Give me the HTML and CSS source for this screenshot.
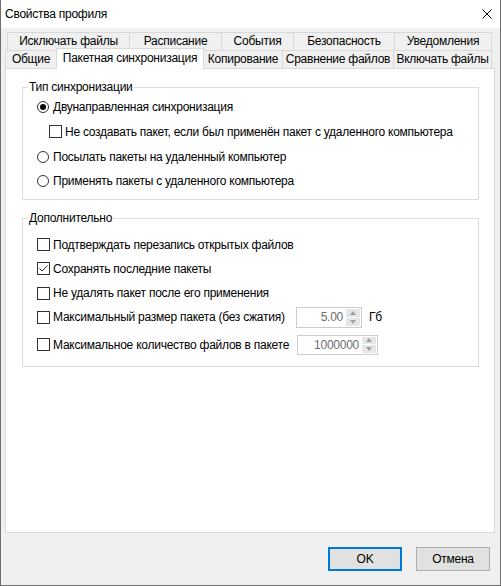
FILE: index.html
```html
<!DOCTYPE html>
<html lang="ru">
<head>
<meta charset="utf-8">
<title>Свойства профиля</title>
<link rel="stylesheet" href="styles.css">
</head>
<body>
<div class="window">
  <div class="titlebar">
    <span class="title">Свойства профиля</span>
    <svg class="close" width="10" height="10" viewBox="0 0 10 10"><path d="M0.5 0.5L9.5 9.5M9.5 0.5L0.5 9.5" stroke="#000" stroke-width="1" fill="none"/></svg>
  </div>
  <div class="client">
    <div class="tabs">
      <div class="tabrow back">
        <div class="tab t-excl">Исключать файлы</div>
        <div class="tab t-sched">Расписание</div>
        <div class="tab t-events">События</div>
        <div class="tab t-sec">Безопасность</div>
        <div class="tab t-notif">Уведомления</div>
      </div>
      <div class="tabrow front">
        <div class="tab t-general">Общие</div>
        <div class="tab t-batch selected">Пакетная синхронизация</div>
        <div class="tab t-copy">Копирование</div>
        <div class="tab t-compare">Сравнение файлов</div>
        <div class="tab t-incl">Включать файлы</div>
      </div>
    </div>
    <div class="panel">
      <fieldset class="group">
        <legend>Тип синхронизации</legend>
        <div class="rows rows-sync">
          <div class="opt h24"><span class="radio on"></span><span>Двунаправленная синхронизация</span></div>
          <div class="opt h25 nested"><span class="check"></span><span>Не создавать пакет, если был применён пакет с удаленного компьютера</span></div>
          <div class="opt h25"><span class="radio"></span><span>Посылать пакеты на удаленный компьютер</span></div>
          <div class="opt h24"><span class="radio"></span><span>Применять пакеты с удаленного компьютера</span></div>
        </div>
      </fieldset>
      <fieldset class="group group-extra">
        <legend>Дополнительно</legend>
        <div class="rows rows-extra">
          <div class="opt h23"><span class="check"></span><span>Подтверждать перезапись открытых файлов</span></div>
          <div class="opt h25"><span class="check checked"><svg width="11" height="11" viewBox="0 0 11 11"><path d="M1.5 5.5L4 8L9.5 2.5" stroke="#333" stroke-width="1" fill="none"/></svg></span><span>Сохранять последние пакеты</span></div>
          <div class="opt h24"><span class="check"></span><span>Не удалять пакет после его применения</span></div>
          <div class="opt h24"><span class="check"></span><span class="lbl lbl-size">Максимальный размер пакета (без сжатия)</span>
            <span class="spin spin-size"><span class="val">5.00</span><span class="arrows"><span class="up"></span><span class="down"></span></span></span>
            <span class="unit">Гб</span>
          </div>
          <div class="opt h31"><span class="check"></span><span class="lbl lbl-count">Максимальное количество файлов в пакете</span>
            <span class="spin spin-count"><span class="val">1000000</span><span class="arrows"><span class="up"></span><span class="down"></span></span></span>
          </div>
        </div>
      </fieldset>
    </div>
    <div class="buttons">
      <button class="btn default">OK</button>
      <button class="btn">Отмена</button>
    </div>
  </div>
</div>
</body>
</html>
```
FILE: styles.css
```css
* { box-sizing: border-box; }
html, body { margin: 0; padding: 0; background: #ffffff; }
body {
  font-family: "Liberation Sans", Arial, sans-serif;
  font-size: 12px;
  letter-spacing: -0.25px;
  color: #000;
}
.window {
  width: 501px;
  height: 586px;
  border: 1px solid #6e6e6e;
  border-top: none;
  background: #f0f0f0;
  display: flex;
  flex-direction: column;
}
.titlebar {
  height: 28px;
  flex: none;
  background: #fff;
  display: flex;
  align-items: center;
  justify-content: space-between;
  padding: 0 8px 0 4px;
}
.title { font-size: 12px; }
.close { display: block; }
.client {
  flex: 1;
  display: flex;
  flex-direction: column;
  padding: 4px 5px 14px 4px;
}
.tabs { height: 36px; flex: none; }
.tabrow { display: flex; align-items: flex-start; height: 18px; }
.tabrow.back { margin-left: 2px; }
.tab {
  height: 18px;
  border: 1px solid #d9d9d9;
  border-bottom: none;
  background: #f0f0f0;
  display: flex;
  align-items: center;
  justify-content: center;
  white-space: nowrap;
  margin-left: -1px;
  padding-bottom: 1px;
}
.tab:first-child { margin-left: 0; }
.tab.selected {
  position: relative;
  z-index: 2;
  height: 21px;
  margin-top: -2px;
  margin-bottom: -1px;
  background: #fff;
  padding-bottom: 2px;
}
.t-excl { width: 123px; }
.t-sched { width: 93px; }
.t-events { width: 73px; }
.t-sec { width: 102px; }
.t-notif { width: 98px; }
.t-general { width: 52px; }
.t-batch { width: 148px; }
.t-copy { width: 80px; }
.t-compare { width: 112px; }
.t-incl { width: 99px; }

.panel {
  flex: none;
  height: 465px;
  background: #fff;
  border: 1px solid #d9d9d9;
  padding: 11px 15px 0 16px;
}
.group {
  margin: 0;
  padding: 0;
  min-width: 0;
  border: 1px solid #dcdcdc;
}
.group legend {
  margin-left: 5px;
  padding: 0 1px;
  line-height: 15px;
  height: 15px;
}
.group-extra { margin-top: 11px; }
.rows { padding-left: 14px; }
.rows-sync { padding-bottom: 6px; }
.rows-extra { padding-top: 7px; padding-bottom: 6px; }
.opt { display: flex; align-items: center; white-space: nowrap; }
.h23 { height: 23px; }
.h24 { height: 24px; }
.h25 { height: 25px; }
.h31 { height: 31px; }
.nested { padding-left: 12px; }
.radio {
  width: 12px;
  height: 12px;
  border: 1px solid #333;
  border-radius: 50%;
  background: #fff;
  margin-right: 4px;
  flex: none;
  display: flex;
  align-items: center;
  justify-content: center;
}
.radio.on::after {
  content: "";
  width: 6px;
  height: 6px;
  border-radius: 50%;
  background: #000;
}
.check {
  width: 13px;
  height: 13px;
  border: 1px solid #333;
  background: #fff;
  margin-right: 3px;
  flex: none;
  display: flex;
  align-items: center;
  justify-content: center;
}
.check svg { display: block; }
.lbl { flex: none; }
.lbl-size { width: 243px; }
.lbl-count { width: 244px; }
.spin {
  display: flex;
  flex: none;
  border: 1px solid #cccccc;
  background: #fff;
  padding: 1px;
}
.spin-size { width: 66px; height: 21px; }
.spin-count { width: 81px; height: 20px; }
.spin .val {
  flex: 1;
  text-align: right;
  color: #6d6d6d;
  padding-right: 3px;
  display: flex;
  align-items: center;
  justify-content: flex-end;
}
.arrows {
  width: 14px;
  display: flex;
  flex-direction: column;
  gap: 1px;
}
.arrows span {
  flex: 1;
  background: #e6e6e6;
  display: flex;
  align-items: center;
  justify-content: center;
}
.arrows .up::after {
  content: "";
  border-left: 3.5px solid transparent;
  border-right: 3.5px solid transparent;
  border-bottom: 4px solid #a0a0a0;
}
.arrows .down::after {
  content: "";
  border-left: 3.5px solid transparent;
  border-right: 3.5px solid transparent;
  border-top: 4px solid #a0a0a0;
}
.unit { margin-left: 7px; }
.buttons {
  margin-top: 14px;
  display: flex;
  justify-content: flex-end;
  gap: 14px;
  padding-right: 5px;
}
.btn {
  width: 74px;
  height: 24px;
  font-family: inherit;
  font-size: 12px;
  letter-spacing: inherit;
  color: #000;
  background: #e1e1e1;
  border: 1px solid #adadad;
  padding: 0;
  margin: 0;
}
.btn.default { border: 2px solid #0078d7; }
```
